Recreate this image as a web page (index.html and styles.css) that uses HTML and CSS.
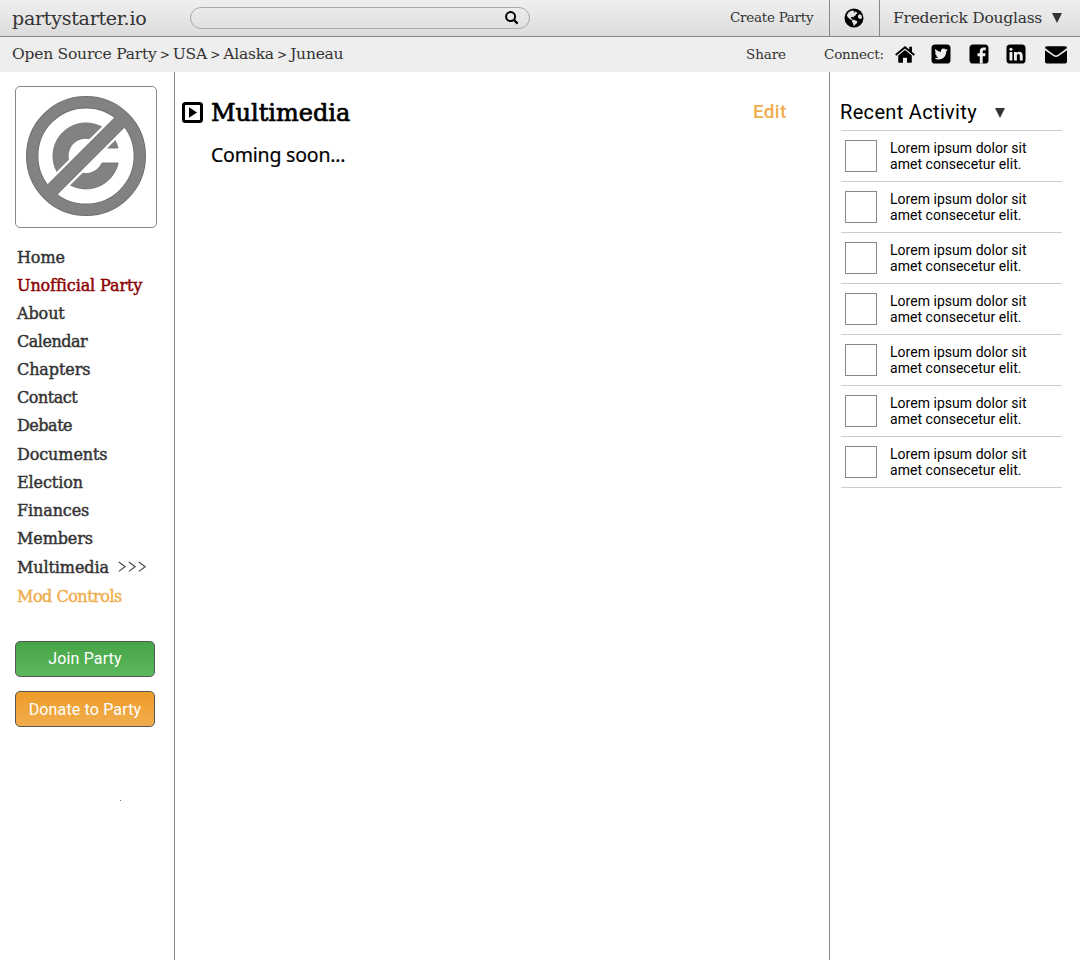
FILE: index.html
```html
<!DOCTYPE html>
<html lang="en">
<head>
<meta charset="utf-8">
<title>partystarter.io</title>
<link rel="stylesheet" href="styles.css">
</head>
<body>
<header class="topbar">
  <a class="brand slab">partystarter.io</a>
  <div class="search">
    <svg width="14" height="14" viewBox="0 0 14 14"><circle cx="5.6" cy="5.6" r="4.5" fill="none" stroke="#000" stroke-width="2"/><path d="M9 9l3.6 3.6" stroke="#000" stroke-width="2.4"/></svg>
  </div>
  <a class="create slab">Create Party</a>
  <div class="globe">
    <svg width="20" height="20" viewBox="0 0 20 20"><circle cx="10" cy="10" r="9.5"/><path fill="#e5e5e5" d="M4.2 4.7L6.5 3l2.600-.6 1.200 1-1 .8 1.500.2.300-1 1.400.7.900 1.500-1.300.4-.6 1.500-1.500.7-.9 1.500-.6-1-1.500.5-.2 1.200 1.300.2.400 1.300 1.600-.2 1.900 1.100 1.500.8-.6 1.600-1.200.9-1.300 1.700-.9-.1-.2-2.300-1.200-1.400.3-1.800-2-.8L3.500 9l-.6-1.800z"/><path fill="#e5e5e5" d="M14.200 7.300l1.500-1 1.700.8.500 2.400-.8 1.500-1.600-.3-1.400-1.500z"/></svg>
  </div>
  <a class="user slab">Frederick Douglass<i class="caret"></i></a>
</header>
<div class="subbar">
  <nav class="crumbs slab">Open Source Party <b>&gt;</b> USA <b>&gt;</b> Alaska <b>&gt;</b> Juneau</nav>
  <a class="share slab">Share</a>
  <div class="connect">
    <span class="label slab">Connect:</span>
    <svg class="home" width="20" height="17" viewBox="0 0 20 17"><path d="M3.200 9.500L10 4l6.800 5.500V16q0 .8-.8.8h-4v-5H8v5H4q-.8 0-.8-.8z"/><path d="M.7 9L10 1.300 19.300 9" fill="none" stroke="#000" stroke-width="1.900"/><path d="M14.200.8H17v6l-2.800-2.200z"/></svg>
    <svg class="tw" width="20" height="20" viewBox="0 0 20 20"><rect x=".5" y=".5" width="19" height="19" rx="3.600"/><path fill="#eee" d="M16.800 5.800q-.8.400-1.600.5.900-.6 1.200-1.600-.8.500-1.700.7a2.800 2.800 0 0 0-4.800 2.500Q6.500 7.700 4.300 5.100q-1.100 2.200.9 3.700-.7 0-1.300-.3 0 2.100 2.200 2.700-.6.200-1.200.1.600 1.800 2.600 1.900-1.800 1.400-4.100 1.100 1.900 1.200 4.200 1.200c5 0 7.700-4 7.700-8.200q.9-.6 1.500-1.500z"/></svg>
    <svg class="fb" width="20" height="20" viewBox="0 0 20 20"><rect x=".5" y=".5" width="19" height="19" rx="3.600"/><path fill="#eee" d="M10.800 19.500v-7.300H8.500V9.300h2.300V7.200c0-2.600 1.500-3.800 3.700-3.800l2.300.1v2.700h-1.600c-1.200 0-1.500.6-1.500 1.400v1.700h2.900l-.4 2.900h-2.500v7.300z"/></svg>
    <svg class="li" width="20" height="20" viewBox="0 0 20 20"><rect x=".5" y=".5" width="19" height="19" rx="3.600"/><path fill="#eee" d="M3.500 7.900h2.900v8.500H3.500zM8 7.900h2.800v1.200c.6-.9 1.400-1.400 2.600-1.400 2 0 3.300 1.300 3.300 3.800v4.900h-2.900v-4.600c0-1.100-.4-1.900-1.400-1.900s-1.500.8-1.500 1.700v4.800H8z"/><circle cx="4.950" cy="5.200" r="1.550" fill="#eee"/></svg>
    <svg class="mail" width="22" height="18" viewBox="0 0 22 18"><path d="M0 2Q0 .3 1.800.3h18.400Q22 .3 22 2L13 8.700q-2 1.400-4 0z"/><path d="M0 4.200l8.300 5.900q2.700 1.800 5.400 0L22 4.200v11.600q0 1.800-1.800 1.800H1.800Q0 17.600 0 15.800z"/></svg>
  </div>
</div>
<div class="page">
  <aside class="sidebar">
    <div class="logo">
      <svg width="120" height="120" viewBox="-60 -60 120 120">
        <path d="M32-8A33 33 0 1 0 32.200 7H16A17.700 17.700 0 1 1 15.600-8z" fill="#828282" stroke="#6c6c6c" stroke-width=".8"/>
        <path d="M-40 40L40-40" stroke="#fff" stroke-width="19"/>
        <circle r="53.800" fill="none" stroke="#6c6c6c" stroke-width="12.400"/>
        <path d="M-38 38L38-38" stroke="#6c6c6c" stroke-width="14.400"/>
        <circle r="53.800" fill="none" stroke="#828282" stroke-width="10.800"/>
        <path d="M-38 38L38-38" stroke="#828282" stroke-width="12.800"/>
      </svg>
    </div>
    <nav class="menu slab">
      <a>Home</a>
      <a class="warn">Unofficial Party</a>
      <a>About</a>
      <a class="tight">Calendar</a>
      <a>Chapters</a>
      <a class="tight">Contact</a>
      <a class="tight">Debate</a>
      <a>Documents</a>
      <a>Election</a>
      <a>Finances</a>
      <a>Members</a>
      <a class="current">Multimedia<svg width="29" height="12" viewBox="0 0 29 12"><path d="M.8 1l6.400 4.700-6.400 4.700M10.800 1l6.400 4.700-6.400 4.700M20.800 1l6.400 4.700-6.400 4.700" fill="none" stroke="#444" stroke-width="1.100"/></svg></a>
      <a class="mod tight">Mod Controls</a>
    </nav>
    <a class="btn join">Join Party</a>
    <a class="btn donate">Donate to Party</a>
    <i class="speck"></i>
  </aside>
  <main class="main">
    <div class="title-row">
      <svg width="22" height="22" viewBox="0 0 22 22"><rect x="1.500" y="1.500" width="18" height="18" rx="2" fill="none" stroke="#000" stroke-width="3"/><path d="M7 5.300l8 5.200-8 5.200z"/></svg>
      <h1 class="slab">Multimedia</h1>
      <a class="edit">Edit</a>
    </div>
    <p class="soon">Coming soon...</p>
  </main>
  <aside class="activity">
    <h2>Recent Activity<i class="caret"></i></h2>
    <ul>
      <li><i class="thumb"></i><span>Lorem ipsum dolor sit<br>amet consecetur elit.</span></li>
      <li><i class="thumb"></i><span>Lorem ipsum dolor sit<br>amet consecetur elit.</span></li>
      <li><i class="thumb"></i><span>Lorem ipsum dolor sit<br>amet consecetur elit.</span></li>
      <li><i class="thumb"></i><span>Lorem ipsum dolor sit<br>amet consecetur elit.</span></li>
      <li><i class="thumb"></i><span>Lorem ipsum dolor sit<br>amet consecetur elit.</span></li>
      <li><i class="thumb"></i><span>Lorem ipsum dolor sit<br>amet consecetur elit.</span></li>
      <li><i class="thumb"></i><span>Lorem ipsum dolor sit<br>amet consecetur elit.</span></li>
    </ul>
  </aside>
</div>
</body>
</html>
```
FILE: styles.css
```css
* { box-sizing: border-box; }
body {
  margin: 0;
  height: 960px;
  display: flex;
  flex-direction: column;
  background: #fff;
  color: #333;
  font-family: Roboto, sans-serif;
  overflow: hidden;
}
svg { display: block; flex: none; }
a, nav, h1, h2, span { white-space: nowrap; }
.slab { font-family: "Roboto Slab", "DejaVu Serif", serif; }
.caret {
  border: 5.500px solid transparent;
  border-top: 10px solid #333;
  border-bottom: 0;
}

.topbar {
  display: flex;
  align-items: center;
  height: 37px;
  flex: none;
  border-bottom: 1px solid #888;
  background: linear-gradient(#efefef, #dcdcdc);
}
.brand { width: 178px; margin-left: 12px; font-size: 19px; line-height: 34px; letter-spacing: -.25px; }
.search {
  width: 340px;
  height: 22px;
  display: flex;
  align-items: center;
  justify-content: flex-end;
  padding: 0 10px 1px 0;
  border: 1px solid #aaa;
  border-radius: 11px;
}
.create { width: 99px; margin-left: 200px; padding-bottom: 2px; font-size: 13.500px; letter-spacing: -.27px; }
.globe {
  width: 51px;
  height: 36px;
  display: flex;
  align-items: center;
  justify-content: center;
  padding-right: 1px;
  border: solid #888;
  border-width: 0 1px;
}
.user { display: flex; align-items: center; justify-content: space-between; width: 169px; margin-left: 13px; padding-bottom: 1px; font-size: 15.500px; letter-spacing: -.25px; }

.subbar { display: flex; align-items: center; height: 35px; padding-bottom: 1px; flex: none; background: #eee; }
.crumbs { width: 734px; padding: 0 0 1px 12px; font-size: 15.500px; letter-spacing: -.22px; }
.crumbs b { margin: 0 -1.500px; font-size: 12px; font-weight: 400; }
.share { width: 90px; padding: 0 0 1px 12px; font-size: 13.500px; letter-spacing: -.1px; }
.connect { display: flex; align-items: center; font-size: 13.500px; }
.connect .label { width: 71px; padding-bottom: 1px; letter-spacing: -.2px; }
.tw { margin-left: 16px; }
.fb { margin-left: 18px; }
.li { margin-left: 17px; }
.mail { margin: 2px 0 0 19px; }

.page { display: grid; grid-template-columns: 175px 654px 251px; flex: 1; }
.sidebar { padding: 14px 0 0 15px; border-right: 1px solid #888; }
.logo {
  width: 142px;
  height: 142px;
  padding: 9px 10px;
  border: 1px solid #888;
  border-radius: 5px;
}
.menu { margin-top: 15px; padding-left: 2px; font-size: 16px; letter-spacing: -.1px; -webkit-text-stroke: .45px currentColor; }
.menu a { display: flex; align-items: center; height: 28.150px; }
.menu .tight { letter-spacing: -.48px; }
.menu .current { height: 29px; }
.menu .current svg { margin-left: 9px; }
.menu .warn { color: #8b0000; }
.menu .mod { height: 29px; color: #f0ad4e; }
.btn {
  display: flex;
  align-items: center;
  justify-content: center;
  width: 140px;
  height: 36px;
  border: 1px solid #555;
  border-radius: 5px;
  color: #fff;
  font-size: 16px;
  letter-spacing: .15px;
}
.join { margin-top: 30.350px; background: linear-gradient(#47a447, #5cb85c); }
.donate { margin-top: 14px; padding-top: 2px; background: linear-gradient(#ed9c28, #f0ad4e); }
.speck { display: block; width: 1px; height: 1px; margin: 73px 0 0 105px; background: #777; }

.main { padding: 24px 0 0 7px; color: #000; }
.title-row { display: flex; align-items: center; height: 34px; }
.title-row h1 { width: 542px; margin: 0 0 0 7px; font-size: 24px; font-weight: 400; -webkit-text-stroke: .7px #000; }
.edit { padding-bottom: 3px; color: #f0ad4e; font-size: 19px; font-weight: 500; letter-spacing: .3px; }
.soon { margin: 12px 0 0 29px; font: 19.500px/26px "Noto Sans", sans-serif; letter-spacing: -.2px; -webkit-text-stroke: .2px #000; }

.activity { padding: 24px 18px 0 11px; border-left: 1px solid #888; color: #000; }
.activity h2 { display: flex; align-items: center; margin: 0 0 0 -1px; height: 34px; padding-bottom: 2px; font-size: 20px; font-weight: 400; letter-spacing: .33px; }
.activity h2 .caret { margin: 2px 0 0 18px; }
.activity ul { margin: 0; padding: 0; list-style: none; border-top: 1px solid #ccc; }
.activity li { display: flex; align-items: center; height: 51px; padding-left: 4px; border-bottom: 1px solid #ccc; font-size: 14px; line-height: 16px; letter-spacing: .03px; }
.thumb { width: 32px; height: 32px; margin-right: 13px; border: 1px solid #888; }
```
